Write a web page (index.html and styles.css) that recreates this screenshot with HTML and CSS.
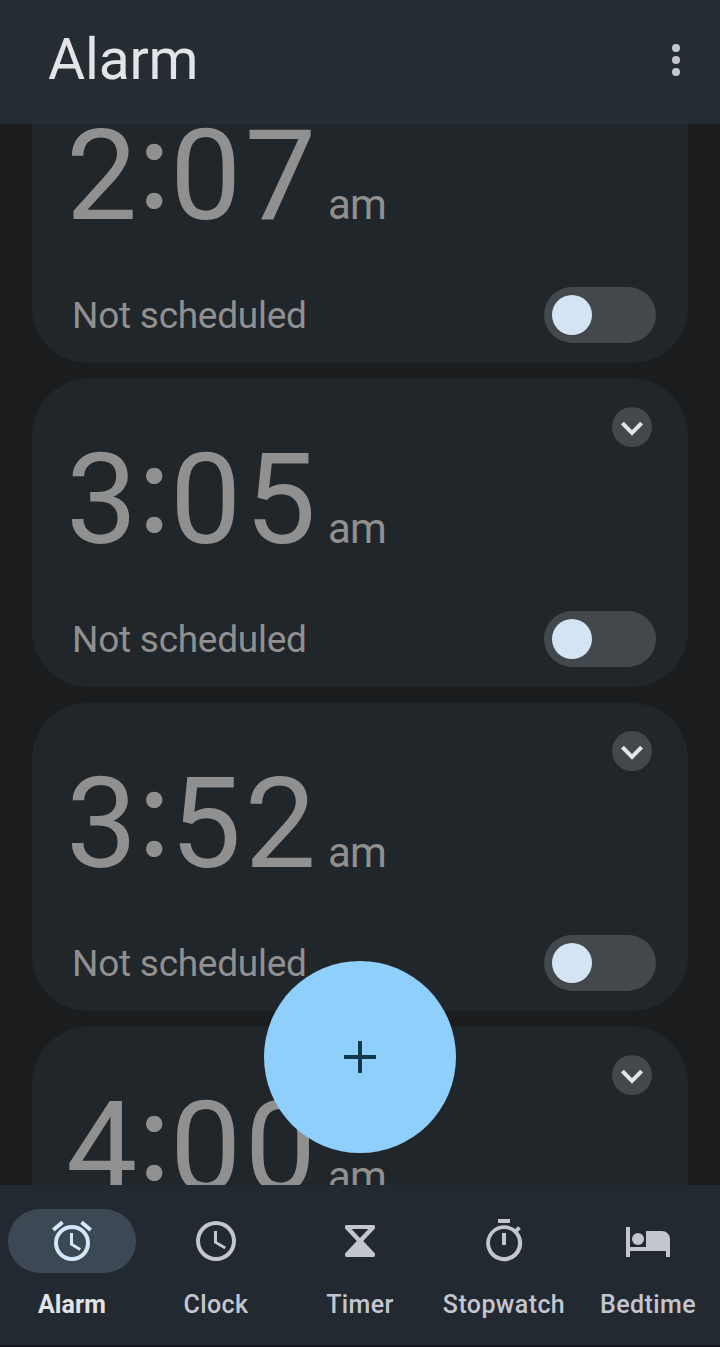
FILE: index.html
```html
<!DOCTYPE html>
<html lang="en">
<head>
<meta charset="utf-8">
<title>Alarm</title>
<link rel="stylesheet" href="styles.css">
</head>
<body>
<div class="app">
  <header class="top-bar">
    <h1 class="title">Alarm</h1>
    <button class="more" aria-label="More options"><i></i><i></i><i></i></button>
  </header>

  <main class="alarms">
    <div class="list">
      <article class="card">
        <div class="card-head"><button class="expand" aria-label="Expand"><svg viewBox="0 0 40 40"><path d="M10.4 16.2 20 25.8l9.6-9.6"/></svg></button></div>
        <div class="time"><span class="digits">2<span class="colon">:</span>07</span><span class="period">am</span></div>
        <div class="card-foot"><span class="status">Not scheduled</span><span class="switch"></span></div>
      </article>
      <article class="card">
        <div class="card-head"><button class="expand" aria-label="Expand"><svg viewBox="0 0 40 40"><path d="M10.4 16.2 20 25.8l9.6-9.6"/></svg></button></div>
        <div class="time"><span class="digits">3<span class="colon">:</span>05</span><span class="period">am</span></div>
        <div class="card-foot"><span class="status">Not scheduled</span><span class="switch"></span></div>
      </article>
      <article class="card">
        <div class="card-head"><button class="expand" aria-label="Expand"><svg viewBox="0 0 40 40"><path d="M10.4 16.2 20 25.8l9.6-9.6"/></svg></button></div>
        <div class="time"><span class="digits">3<span class="colon">:</span>52</span><span class="period">am</span></div>
        <div class="card-foot"><span class="status">Not scheduled</span><span class="switch"></span></div>
      </article>
      <article class="card">
        <div class="card-head"><button class="expand" aria-label="Expand"><svg viewBox="0 0 40 40"><path d="M10.4 16.2 20 25.8l9.6-9.6"/></svg></button></div>
        <div class="time"><span class="digits">4<span class="colon">:</span>00</span><span class="period">am</span></div>
      </article>
    </div>
    <button class="fab" aria-label="Add alarm"><svg viewBox="0 0 32 32"><path d="M14 0h4v14h14v4H18v14h-4V18H0v-4h14z"/></svg></button>
  </main>

  <nav class="nav">
    <a class="tab active">
      <span class="pill"><svg viewBox="0 0 24 24"><path d="m22 5.720-4.600-3.860-1.290 1.530 4.600 3.860L22 5.720zM7.880 3.390 6.600 1.860 2 5.710l1.290 1.530 4.590-3.850zM12.500 8H11v6l4.750 2.850.75-1.230-4-2.370V8zM12 4a9 9 0 1 0 0 18 9 9 0 0 0 0-18zm0 16a7 7 0 1 1 0-14 7 7 0 0 1 0 14z"/></svg></span>
      <span class="label">Alarm</span>
    </a>
    <a class="tab">
      <span class="pill"><svg viewBox="0 0 24 24"><path d="M12 2a10 10 0 1 0 0 20 10 10 0 0 0 0-20zm0 18a8 8 0 1 1 0-16 8 8 0 0 1 0 16zm.5-13H11v6l5.250 3.150.75-1.230-4.500-2.670V7z"/></svg></span>
      <span class="label">Clock</span>
    </a>
    <a class="tab">
      <span class="pill"><svg viewBox="0 0 24 24"><path fill-rule="evenodd" d="M5.200 4h13.600q.7 0 .7.700v.8q0 .3-.25.550L13.600 12l5.650 5.950q.25.250.25.550v.8q0 .7-.7.700H5.200q-.7 0-.7-.7v-.8q0-.3.250-.550L10.400 12 4.750 6.050Q4.500 5.800 4.500 5.500v-.8Q4.500 4 5.200 4zM7.800 6 12 10.500 16.200 6z"/></svg></span>
      <span class="label">Timer</span>
    </a>
    <a class="tab">
      <span class="pill"><svg viewBox="0 0 24 24"><path d="M15 1H9v2h6V1zm-4 13h2V8h-2v6zm8.030-6.610 1.220-1.220c.1-.1.100-.3 0-.4l-1-1c-.1-.1-.3-.1-.4 0l-1.240 1.240A9 9 0 1 0 19.030 7.390zM12 20a7 7 0 1 1 0-14 7 7 0 0 1 0 14z"/></svg></span>
      <span class="label">Stopwatch</span>
    </a>
    <a class="tab">
      <span class="pill"><svg viewBox="0 0 24 24"><path d="M1 5h2v10h8V7h8a4 4 0 0 1 4 4v9h-2v-3H3v3H1z"/><circle cx="7" cy="11" r="3"/></svg></span>
      <span class="label">Bedtime</span>
    </a>
  </nav>
</div>
</body>
</html>
```
FILE: styles.css
```css
* { box-sizing: border-box; }
body { margin: 0; background: #1b1c1d; font-family: Roboto, "Liberation Sans", sans-serif; }
button { border: 0; padding: 0; margin: 0; }

.app { display: flex; flex-direction: column; width: 720px; height: 1347px; overflow: hidden; }

.top-bar {
  flex: none; height: 124px; padding: 0 38px 4px 48px;
  display: flex; align-items: center; justify-content: space-between;
  background: #252c32;
}
.title { margin: 0; font-size: 57px; line-height: 68px; letter-spacing: -.2px; font-weight: 400; color: #e2e4e7; }
.more { display: flex; flex-direction: column; gap: 4px; padding: 0 2px; background: none; }
.more i { width: 8px; height: 8px; border-radius: 50%; background: #c3c6cf; }

.alarms { position: relative; flex: 1; min-height: 0; overflow: hidden; }
.list { display: flex; flex-direction: column; gap: 16px; margin-top: -69px; padding: 0 32px; }
.card {
  flex: none; height: 308px; padding: 28px 32px 20px 40px; border-radius: 56px;
  display: flex; flex-direction: column; background: #20262a;
}
.card-head { display: flex; justify-content: flex-end; padding-right: 4px; height: 40px; }
.expand { width: 40px; height: 40px; border-radius: 50%; background: #42484b; }
.expand svg { display: block; width: 40px; height: 40px; fill: none; stroke: #e3e5e5; stroke-width: 4; }

.time { display: flex; align-items: baseline; height: 164px; margin-left: -6px; color: #909090; line-height: 106px; }
.digits { width: 262px; font-size: 127px; letter-spacing: 3.5px; white-space: nowrap; }
.colon { display: inline-block; width: 29px; margin: 0 3px 0 -3px; text-align: center; letter-spacing: 0; font-family: Lato, sans-serif; font-size: 130px; line-height: 50px; transform: translateY(-11px); }
.period { font-size: 42px; letter-spacing: -.8px; }

.card-foot { display: flex; justify-content: space-between; align-items: center; height: 56px; }
.status { padding-top: 1px; font-size: 37px; letter-spacing: -.25px; color: #909090; }
.switch { width: 112px; height: 56px; padding: 8px; border-radius: 28px; background: #42484b; }
.switch::before { content: ""; display: block; width: 40px; height: 40px; border-radius: 50%; background: #d5e4f4; }

.fab {
  position: absolute; left: 264px; bottom: 32px; width: 192px; height: 192px; border-radius: 50%;
  display: flex; align-items: center; justify-content: center; background: #8ecffb;
}
.fab svg { width: 32px; height: 32px; fill: #12364a; }

.nav { flex: none; height: 162px; padding-top: 24px; display: grid; grid-template-columns: repeat(5, 1fr); background: #232931; border-bottom: 2px solid #14171f; }
.tab { display: flex; flex-direction: column; align-items: center; gap: 16px; color: #c3c6cf; }
.pill { display: flex; align-items: center; justify-content: center; width: 128px; height: 64px; border-radius: 32px; }
.pill svg { width: 48px; height: 48px; fill: currentColor; }
.active .pill { background: #3c4853; color: #d5e8fb; }
.label { font-size: 25px; line-height: 32px; font-weight: 500; letter-spacing: .4px; white-space: nowrap; }
.active .label { color: #e2e3e6; font-weight: 700; letter-spacing: .1px; }
```
